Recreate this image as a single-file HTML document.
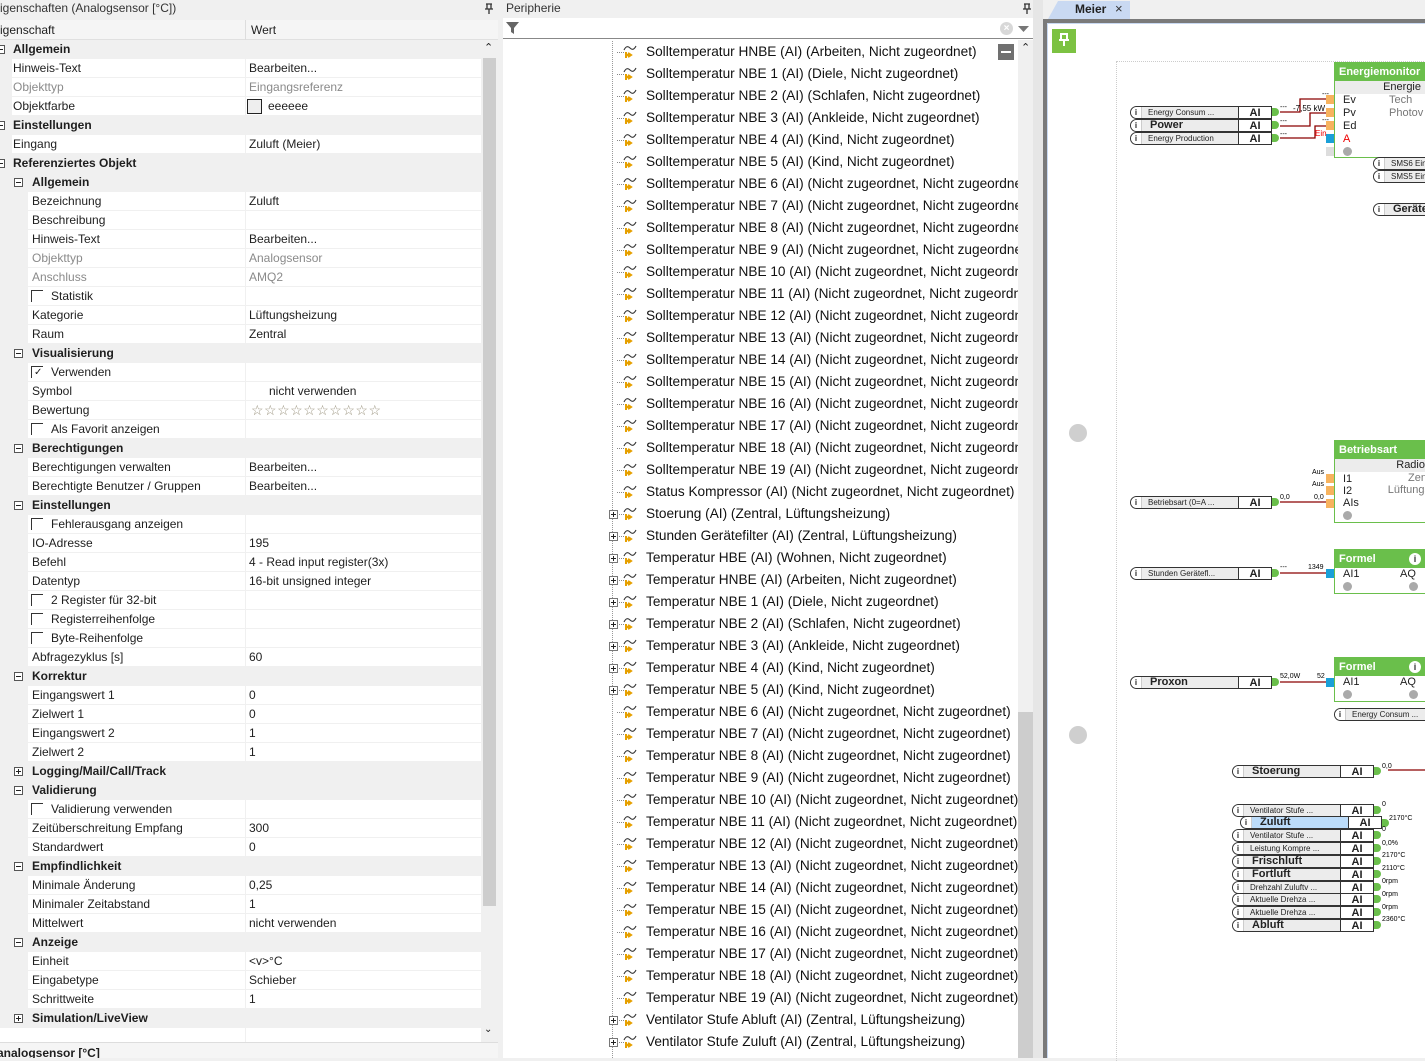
<!DOCTYPE html>
<html><head><meta charset="utf-8">
<style>
*{margin:0;padding:0;box-sizing:border-box}
body{width:1425px;height:1058px;overflow:hidden;background:#f0f0f0;font-family:"Liberation Sans",Arial,sans-serif;position:relative;color:#1e1e1e}
.abs{position:absolute}
#left{position:absolute;left:0;top:0;width:498px;height:1058px;background:#f0f0f0;overflow:hidden}
.ttl{font-size:12px;color:#333;position:absolute;top:1px;white-space:nowrap}
#hdr{position:absolute;left:0;top:20px;width:498px;height:20px;background:#f5f5f5;border-bottom:1px solid #e0e0e0;font-size:12px}
#rows{position:absolute;left:0;top:40px;width:481px}
.r{height:19px;position:relative;font-size:12px;line-height:19px;white-space:nowrap}
.r .n{position:absolute;top:0;height:18px;left:12px;width:233px;background:#fff}
.r .v{position:absolute;top:0;height:18px;left:246px;right:0;background:#fff;padding-left:3px}
.r.l2 .n{left:28px;width:217px}
.r .n span{padding-left:1px}
.r.l2 .n span{padding-left:4px}
.r.l2 .n span.cbt{padding-left:23px}
.r.l2 .n span.cb{padding-left:0}
.g{font-weight:bold;font-size:12px}
.g .t{position:absolute;left:13px}
.g.l2 .t{left:32px}
.pm{position:absolute;top:5px;width:9px;height:9px;border:1px solid #555;background:#fff}
.pm:before{content:"";position:absolute;left:1px;top:3px;width:5px;height:1px;background:#222}
.pm.p:after{content:"";position:absolute;left:3px;top:1px;width:1px;height:5px;background:#222}
.gr{color:#8a8a8a}
.cb{position:absolute;left:3px;top:3px;width:12px;height:12px;border-left:1px solid #333;border-top:1px solid #333}
.ck{position:absolute;left:6px;top:0;font-size:10px}
.it{position:absolute;left:143px;height:22px;line-height:22px;font-size:13.65px;white-space:nowrap;width:372px;overflow:hidden;color:#111}
.ic{position:absolute;left:118px;width:24px;height:18px}
.pb{position:absolute;left:106px;width:9px;height:9px;border:1px solid #777;background:#fff}
.pb:before{content:"";position:absolute;left:1px;top:3px;width:5px;height:1px;background:#222}
.pb:after{content:"";position:absolute;left:3px;top:1px;width:1px;height:5px;background:#222}
.dl{position:absolute;left:114px;width:9px;border-top:1px dotted #888}
.lb{position:absolute;height:13px;border:1px solid #333;border-radius:7px 0 0 7px;background:#ececec;font-size:8px;line-height:11px;white-space:nowrap;overflow:hidden;font-family:"Liberation Sans",Arial,sans-serif;color:#222}
.lb .i{position:absolute;left:0;top:0;width:11px;height:11px;background:#fff;border-right:1px solid #ccc;font-weight:bold;font-size:8px;text-align:center;border-radius:6px 0 0 6px}
.lb .tx{position:absolute;left:17px;top:0}
.lb .tx.b{font-size:11px;font-weight:bold;left:19px;top:0}
.lb .ai{position:absolute;right:0;top:0;width:33px;height:11px;border-left:1px solid #333;background:#fff;font-size:11px;font-weight:bold;text-align:center;line-height:12px}
.dot{position:absolute;width:7px;height:8px;background:#6abf4b;border-radius:0 4px 4px 0}
.blk{position:absolute;border:1px solid #6abf4b;background:#fff;font-size:11px}
.blk .h{background:#6abf4b;color:#fff;font-weight:bold;height:18px;line-height:18px;padding-left:4px;font-size:11px}
.sm{position:absolute;font-size:7px;color:#000;font-family:"Liberation Sans",Arial,sans-serif}
.op{position:absolute;width:8px;height:9px;background:#f7b35e}
</style></head><body>

<svg width="0" height="0" style="position:absolute"><defs>
<g id="pin"><path d="M2 1h6M3 1v5h4V1M1 6h8M5 6v5" stroke="#333" stroke-width="1.3" fill="none"/></g>
<g id="ico"><path d="M3 9c2-4 4-4 6-2s4 2 6-2" stroke="#333" stroke-width="1.1" fill="none"/><path d="M5 11v6M5 14h4M7 12l3 2-3 2" stroke="#e6a000" stroke-width="2" fill="none"/></g>
</defs></svg>

<div id="left">
<div class="ttl" style="left:-8px">Eigenschaften (Analogsensor [°C])</div>
<svg class="abs" style="left:484px;top:3px" width="10" height="12"><use href="#pin"/></svg>
<div id="hdr"><span class="abs" style="left:-8px;top:3px">Eigenschaft</span><span class="abs" style="left:245px;top:0;height:20px;border-left:1px solid #ddd"></span><span class="abs" style="left:251px;top:3px">Wert</span></div>
<div id="rows">
<div class="r g"><span class="pm" style="left:-4px"></span><span class="t">Allgemein</span></div>
<div class="r"><div class="n"><span>Hinweis-Text</span></div><div class="v">Bearbeiten...</div></div>
<div class="r gr"><div class="n"><span>Objekttyp</span></div><div class="v">Eingangsreferenz</div></div>
<div class="r"><div class="n"><span>Objektfarbe</span></div><div class="v"><span class="abs" style="left:1px;top:2px;width:15px;height:15px;border:1px solid #222;background:#eee"></span><span style="padding-left:19px">eeeeee</span></div></div>
<div class="r g"><span class="pm" style="left:-4px"></span><span class="t">Einstellungen</span></div>
<div class="r"><div class="n"><span>Eingang</span></div><div class="v">Zuluft (Meier)</div></div>
<div class="r g"><span class="pm" style="left:-4px"></span><span class="t">Referenziertes Objekt</span></div>
<div class="r g l2"><span class="pm" style="left:14px"></span><span class="t">Allgemein</span></div>
<div class="r l2"><div class="n"><span>Bezeichnung</span></div><div class="v">Zuluft</div></div>
<div class="r l2"><div class="n"><span>Beschreibung</span></div><div class="v"></div></div>
<div class="r l2"><div class="n"><span>Hinweis-Text</span></div><div class="v">Bearbeiten...</div></div>
<div class="r l2 gr"><div class="n"><span>Objekttyp</span></div><div class="v">Analogsensor</div></div>
<div class="r l2 gr"><div class="n"><span>Anschluss</span></div><div class="v">AMQ2</div></div>
<div class="r l2"><div class="n"><span class="cb"></span><span class="cbt">Statistik</span></div><div class="v"></div></div>
<div class="r l2"><div class="n"><span>Kategorie</span></div><div class="v">Lüftungsheizung</div></div>
<div class="r l2"><div class="n"><span>Raum</span></div><div class="v">Zentral</div></div>
<div class="r g l2"><span class="pm" style="left:14px"></span><span class="t">Visualisierung</span></div>
<div class="r l2"><div class="n"><span class="cb"></span><b class="ck" style="font-weight:normal">&#10003;</b><span class="cbt">Verwenden</span></div><div class="v"></div></div>
<div class="r l2"><div class="n"><span>Symbol</span></div><div class="v"><span style="padding-left:20px">nicht verwenden</span></div></div>
<div class="r l2"><div class="n"><span>Bewertung</span></div><div class="v" style="color:#9c9580;font-size:14px;letter-spacing:0.5px;padding-left:5px">☆☆☆☆☆☆☆☆☆☆</div></div>
<div class="r l2"><div class="n"><span class="cb"></span><span class="cbt">Als Favorit anzeigen</span></div><div class="v"></div></div>
<div class="r g l2"><span class="pm" style="left:14px"></span><span class="t">Berechtigungen</span></div>
<div class="r l2"><div class="n"><span>Berechtigungen verwalten</span></div><div class="v">Bearbeiten...</div></div>
<div class="r l2"><div class="n"><span>Berechtigte Benutzer / Gruppen</span></div><div class="v">Bearbeiten...</div></div>
<div class="r g l2"><span class="pm" style="left:14px"></span><span class="t">Einstellungen</span></div>
<div class="r l2"><div class="n"><span class="cb"></span><span class="cbt">Fehlerausgang anzeigen</span></div><div class="v"></div></div>
<div class="r l2"><div class="n"><span>IO-Adresse</span></div><div class="v">195</div></div>
<div class="r l2"><div class="n"><span>Befehl</span></div><div class="v">4 - Read input register(3x)</div></div>
<div class="r l2"><div class="n"><span>Datentyp</span></div><div class="v">16-bit unsigned integer</div></div>
<div class="r l2"><div class="n"><span class="cb"></span><span class="cbt">2 Register für 32-bit</span></div><div class="v"></div></div>
<div class="r l2"><div class="n"><span class="cb"></span><span class="cbt">Registerreihenfolge</span></div><div class="v"></div></div>
<div class="r l2"><div class="n"><span class="cb"></span><span class="cbt">Byte-Reihenfolge</span></div><div class="v"></div></div>
<div class="r l2"><div class="n"><span>Abfragezyklus [s]</span></div><div class="v">60</div></div>
<div class="r g l2"><span class="pm" style="left:14px"></span><span class="t">Korrektur</span></div>
<div class="r l2"><div class="n"><span>Eingangswert 1</span></div><div class="v">0</div></div>
<div class="r l2"><div class="n"><span>Zielwert 1</span></div><div class="v">0</div></div>
<div class="r l2"><div class="n"><span>Eingangswert 2</span></div><div class="v">1</div></div>
<div class="r l2"><div class="n"><span>Zielwert 2</span></div><div class="v">1</div></div>
<div class="r g l2"><span class="pm p" style="left:14px"></span><span class="t">Logging/Mail/Call/Track</span></div>
<div class="r g l2"><span class="pm" style="left:14px"></span><span class="t">Validierung</span></div>
<div class="r l2"><div class="n"><span class="cb"></span><span class="cbt">Validierung verwenden</span></div><div class="v"></div></div>
<div class="r l2"><div class="n"><span>Zeitüberschreitung Empfang</span></div><div class="v">300</div></div>
<div class="r l2"><div class="n"><span>Standardwert</span></div><div class="v">0</div></div>
<div class="r g l2"><span class="pm" style="left:14px"></span><span class="t">Empfindlichkeit</span></div>
<div class="r l2"><div class="n"><span>Minimale Änderung</span></div><div class="v">0,25</div></div>
<div class="r l2"><div class="n"><span>Minimaler Zeitabstand</span></div><div class="v">1</div></div>
<div class="r l2"><div class="n"><span>Mittelwert</span></div><div class="v">nicht verwenden</div></div>
<div class="r g l2"><span class="pm" style="left:14px"></span><span class="t">Anzeige</span></div>
<div class="r l2"><div class="n"><span>Einheit</span></div><div class="v">&lt;v&gt;°C</div></div>
<div class="r l2"><div class="n"><span>Eingabetype</span></div><div class="v">Schieber</div></div>
<div class="r l2"><div class="n"><span>Schrittweite</span></div><div class="v">1</div></div>
<div class="r g l2"><span class="pm p" style="left:14px"></span><span class="t">Simulation/LiveView</span></div>
<div class="r"><div class="n" style="left:0;width:245px"></div><div class="v"></div></div>
</div>
<div class="abs" style="left:481px;top:40px;width:16px;height:1000px;background:#f0f0f0"></div>
<div class="abs" style="left:483px;top:58px;width:13px;height:848px;background:#cdcdcd"></div>
<div class="abs" style="left:484px;top:41px;font-size:11px">&#8963;</div>
<div class="abs" style="left:484px;top:1024px;font-size:10px">&#8964;</div>
<div class="abs" style="left:0;top:1042px;width:498px;height:16px;background:#f5f5f5;border-top:1px solid #ddd"></div>
<div class="abs" style="left:-3px;top:1046px;font-size:12px;font-weight:bold">analogsensor [°C]</div>
</div>

<div class="abs" style="left:498px;top:0;width:5px;height:1058px;background:#f0f0f0"></div>

<div class="abs" style="left:503px;top:0;width:530px;height:1058px;background:#fff">
<div class="abs" style="left:0;top:0;width:530px;height:18px;background:#f0f0f0"></div>
<div class="abs" style="left:3px;top:1px;font-size:12px;color:#333">Peripherie</div>
<svg class="abs" style="left:519px;top:3px" width="10" height="12"><use href="#pin"/></svg>
<div class="abs" style="left:0;top:18px;width:530px;height:21px;background:#fff;border-bottom:1px solid #888"></div>
<svg class="abs" style="left:3px;top:21px" width="14" height="14"><path d="M0 1h13l-5 6v6l-3-2v-4z" fill="#666"/></svg>
<div class="abs" style="left:497px;top:22px;width:13px;height:13px;border-radius:7px;background:#d8d8d8;color:#fff;font-size:10px;text-align:center;line-height:13px;font-weight:bold">×</div>
<svg class="abs" style="left:515px;top:26px" width="11" height="7"><path d="M0 0h11l-5.5 6z" fill="#777"/></svg>
<div class="abs" style="left:109px;top:41px;height:1017px;border-left:1px dotted #999"></div>
<div class="abs" style="left:515px;top:40px;width:15px;height:1018px;background:#f0f0f0"></div>
<div class="abs" style="left:515px;top:712px;width:15px;height:346px;background:#cdcdcd"></div>
<div class="abs" style="left:518px;top:41px;font-size:11px">&#8963;</div>
<div class="abs" style="left:495px;top:44px;width:16px;height:16px;background:#707070"><div style="margin:7px 3px;height:2px;background:#fff"></div></div>
</div>

<div class="abs" style="left:503px;top:0;width:515px;height:1058px;overflow:hidden">
<div class="dl" style="top:52px"></div><svg class="ic" style="top:41px" viewBox="0 0 24 18"><use href="#ico"/></svg><div class="it" style="top:41px">Solltemperatur HNBE (AI) (Arbeiten, Nicht zugeordnet)</div>
<div class="dl" style="top:74px"></div><svg class="ic" style="top:63px" viewBox="0 0 24 18"><use href="#ico"/></svg><div class="it" style="top:63px">Solltemperatur NBE 1 (AI) (Diele, Nicht zugeordnet)</div>
<div class="dl" style="top:96px"></div><svg class="ic" style="top:85px" viewBox="0 0 24 18"><use href="#ico"/></svg><div class="it" style="top:85px">Solltemperatur NBE 2 (AI) (Schlafen, Nicht zugeordnet)</div>
<div class="dl" style="top:118px"></div><svg class="ic" style="top:107px" viewBox="0 0 24 18"><use href="#ico"/></svg><div class="it" style="top:107px">Solltemperatur NBE 3 (AI) (Ankleide, Nicht zugeordnet)</div>
<div class="dl" style="top:140px"></div><svg class="ic" style="top:129px" viewBox="0 0 24 18"><use href="#ico"/></svg><div class="it" style="top:129px">Solltemperatur NBE 4 (AI) (Kind, Nicht zugeordnet)</div>
<div class="dl" style="top:162px"></div><svg class="ic" style="top:151px" viewBox="0 0 24 18"><use href="#ico"/></svg><div class="it" style="top:151px">Solltemperatur NBE 5 (AI) (Kind, Nicht zugeordnet)</div>
<div class="dl" style="top:184px"></div><svg class="ic" style="top:173px" viewBox="0 0 24 18"><use href="#ico"/></svg><div class="it" style="top:173px">Solltemperatur NBE 6 (AI) (Nicht zugeordnet, Nicht zugeordnet)</div>
<div class="dl" style="top:206px"></div><svg class="ic" style="top:195px" viewBox="0 0 24 18"><use href="#ico"/></svg><div class="it" style="top:195px">Solltemperatur NBE 7 (AI) (Nicht zugeordnet, Nicht zugeordnet)</div>
<div class="dl" style="top:228px"></div><svg class="ic" style="top:217px" viewBox="0 0 24 18"><use href="#ico"/></svg><div class="it" style="top:217px">Solltemperatur NBE 8 (AI) (Nicht zugeordnet, Nicht zugeordnet)</div>
<div class="dl" style="top:250px"></div><svg class="ic" style="top:239px" viewBox="0 0 24 18"><use href="#ico"/></svg><div class="it" style="top:239px">Solltemperatur NBE 9 (AI) (Nicht zugeordnet, Nicht zugeordnet)</div>
<div class="dl" style="top:272px"></div><svg class="ic" style="top:261px" viewBox="0 0 24 18"><use href="#ico"/></svg><div class="it" style="top:261px">Solltemperatur NBE 10 (AI) (Nicht zugeordnet, Nicht zugeordnet)</div>
<div class="dl" style="top:294px"></div><svg class="ic" style="top:283px" viewBox="0 0 24 18"><use href="#ico"/></svg><div class="it" style="top:283px">Solltemperatur NBE 11 (AI) (Nicht zugeordnet, Nicht zugeordnet)</div>
<div class="dl" style="top:316px"></div><svg class="ic" style="top:305px" viewBox="0 0 24 18"><use href="#ico"/></svg><div class="it" style="top:305px">Solltemperatur NBE 12 (AI) (Nicht zugeordnet, Nicht zugeordnet)</div>
<div class="dl" style="top:338px"></div><svg class="ic" style="top:327px" viewBox="0 0 24 18"><use href="#ico"/></svg><div class="it" style="top:327px">Solltemperatur NBE 13 (AI) (Nicht zugeordnet, Nicht zugeordnet)</div>
<div class="dl" style="top:360px"></div><svg class="ic" style="top:349px" viewBox="0 0 24 18"><use href="#ico"/></svg><div class="it" style="top:349px">Solltemperatur NBE 14 (AI) (Nicht zugeordnet, Nicht zugeordnet)</div>
<div class="dl" style="top:382px"></div><svg class="ic" style="top:371px" viewBox="0 0 24 18"><use href="#ico"/></svg><div class="it" style="top:371px">Solltemperatur NBE 15 (AI) (Nicht zugeordnet, Nicht zugeordnet)</div>
<div class="dl" style="top:404px"></div><svg class="ic" style="top:393px" viewBox="0 0 24 18"><use href="#ico"/></svg><div class="it" style="top:393px">Solltemperatur NBE 16 (AI) (Nicht zugeordnet, Nicht zugeordnet)</div>
<div class="dl" style="top:426px"></div><svg class="ic" style="top:415px" viewBox="0 0 24 18"><use href="#ico"/></svg><div class="it" style="top:415px">Solltemperatur NBE 17 (AI) (Nicht zugeordnet, Nicht zugeordnet)</div>
<div class="dl" style="top:448px"></div><svg class="ic" style="top:437px" viewBox="0 0 24 18"><use href="#ico"/></svg><div class="it" style="top:437px">Solltemperatur NBE 18 (AI) (Nicht zugeordnet, Nicht zugeordnet)</div>
<div class="dl" style="top:470px"></div><svg class="ic" style="top:459px" viewBox="0 0 24 18"><use href="#ico"/></svg><div class="it" style="top:459px">Solltemperatur NBE 19 (AI) (Nicht zugeordnet, Nicht zugeordnet)</div>
<div class="dl" style="top:492px"></div><svg class="ic" style="top:481px" viewBox="0 0 24 18"><use href="#ico"/></svg><div class="it" style="top:481px">Status Kompressor (AI) (Nicht zugeordnet, Nicht zugeordnet)</div>
<div class="pb" style="top:510px"></div><div class="dl" style="top:514px"></div><svg class="ic" style="top:503px" viewBox="0 0 24 18"><use href="#ico"/></svg><div class="it" style="top:503px">Stoerung (AI) (Zentral, Lüftungsheizung)</div>
<div class="pb" style="top:532px"></div><div class="dl" style="top:536px"></div><svg class="ic" style="top:525px" viewBox="0 0 24 18"><use href="#ico"/></svg><div class="it" style="top:525px">Stunden Gerätefilter (AI) (Zentral, Lüftungsheizung)</div>
<div class="pb" style="top:554px"></div><div class="dl" style="top:558px"></div><svg class="ic" style="top:547px" viewBox="0 0 24 18"><use href="#ico"/></svg><div class="it" style="top:547px">Temperatur HBE (AI) (Wohnen, Nicht zugeordnet)</div>
<div class="pb" style="top:576px"></div><div class="dl" style="top:580px"></div><svg class="ic" style="top:569px" viewBox="0 0 24 18"><use href="#ico"/></svg><div class="it" style="top:569px">Temperatur HNBE (AI) (Arbeiten, Nicht zugeordnet)</div>
<div class="pb" style="top:598px"></div><div class="dl" style="top:602px"></div><svg class="ic" style="top:591px" viewBox="0 0 24 18"><use href="#ico"/></svg><div class="it" style="top:591px">Temperatur NBE 1 (AI) (Diele, Nicht zugeordnet)</div>
<div class="pb" style="top:620px"></div><div class="dl" style="top:624px"></div><svg class="ic" style="top:613px" viewBox="0 0 24 18"><use href="#ico"/></svg><div class="it" style="top:613px">Temperatur NBE 2 (AI) (Schlafen, Nicht zugeordnet)</div>
<div class="pb" style="top:642px"></div><div class="dl" style="top:646px"></div><svg class="ic" style="top:635px" viewBox="0 0 24 18"><use href="#ico"/></svg><div class="it" style="top:635px">Temperatur NBE 3 (AI) (Ankleide, Nicht zugeordnet)</div>
<div class="pb" style="top:664px"></div><div class="dl" style="top:668px"></div><svg class="ic" style="top:657px" viewBox="0 0 24 18"><use href="#ico"/></svg><div class="it" style="top:657px">Temperatur NBE 4 (AI) (Kind, Nicht zugeordnet)</div>
<div class="pb" style="top:686px"></div><div class="dl" style="top:690px"></div><svg class="ic" style="top:679px" viewBox="0 0 24 18"><use href="#ico"/></svg><div class="it" style="top:679px">Temperatur NBE 5 (AI) (Kind, Nicht zugeordnet)</div>
<div class="dl" style="top:712px"></div><svg class="ic" style="top:701px" viewBox="0 0 24 18"><use href="#ico"/></svg><div class="it" style="top:701px">Temperatur NBE 6 (AI) (Nicht zugeordnet, Nicht zugeordnet)</div>
<div class="dl" style="top:734px"></div><svg class="ic" style="top:723px" viewBox="0 0 24 18"><use href="#ico"/></svg><div class="it" style="top:723px">Temperatur NBE 7 (AI) (Nicht zugeordnet, Nicht zugeordnet)</div>
<div class="dl" style="top:756px"></div><svg class="ic" style="top:745px" viewBox="0 0 24 18"><use href="#ico"/></svg><div class="it" style="top:745px">Temperatur NBE 8 (AI) (Nicht zugeordnet, Nicht zugeordnet)</div>
<div class="dl" style="top:778px"></div><svg class="ic" style="top:767px" viewBox="0 0 24 18"><use href="#ico"/></svg><div class="it" style="top:767px">Temperatur NBE 9 (AI) (Nicht zugeordnet, Nicht zugeordnet)</div>
<div class="dl" style="top:800px"></div><svg class="ic" style="top:789px" viewBox="0 0 24 18"><use href="#ico"/></svg><div class="it" style="top:789px">Temperatur NBE 10 (AI) (Nicht zugeordnet, Nicht zugeordnet)</div>
<div class="dl" style="top:822px"></div><svg class="ic" style="top:811px" viewBox="0 0 24 18"><use href="#ico"/></svg><div class="it" style="top:811px">Temperatur NBE 11 (AI) (Nicht zugeordnet, Nicht zugeordnet)</div>
<div class="dl" style="top:844px"></div><svg class="ic" style="top:833px" viewBox="0 0 24 18"><use href="#ico"/></svg><div class="it" style="top:833px">Temperatur NBE 12 (AI) (Nicht zugeordnet, Nicht zugeordnet)</div>
<div class="dl" style="top:866px"></div><svg class="ic" style="top:855px" viewBox="0 0 24 18"><use href="#ico"/></svg><div class="it" style="top:855px">Temperatur NBE 13 (AI) (Nicht zugeordnet, Nicht zugeordnet)</div>
<div class="dl" style="top:888px"></div><svg class="ic" style="top:877px" viewBox="0 0 24 18"><use href="#ico"/></svg><div class="it" style="top:877px">Temperatur NBE 14 (AI) (Nicht zugeordnet, Nicht zugeordnet)</div>
<div class="dl" style="top:910px"></div><svg class="ic" style="top:899px" viewBox="0 0 24 18"><use href="#ico"/></svg><div class="it" style="top:899px">Temperatur NBE 15 (AI) (Nicht zugeordnet, Nicht zugeordnet)</div>
<div class="dl" style="top:932px"></div><svg class="ic" style="top:921px" viewBox="0 0 24 18"><use href="#ico"/></svg><div class="it" style="top:921px">Temperatur NBE 16 (AI) (Nicht zugeordnet, Nicht zugeordnet)</div>
<div class="dl" style="top:954px"></div><svg class="ic" style="top:943px" viewBox="0 0 24 18"><use href="#ico"/></svg><div class="it" style="top:943px">Temperatur NBE 17 (AI) (Nicht zugeordnet, Nicht zugeordnet)</div>
<div class="dl" style="top:976px"></div><svg class="ic" style="top:965px" viewBox="0 0 24 18"><use href="#ico"/></svg><div class="it" style="top:965px">Temperatur NBE 18 (AI) (Nicht zugeordnet, Nicht zugeordnet)</div>
<div class="dl" style="top:998px"></div><svg class="ic" style="top:987px" viewBox="0 0 24 18"><use href="#ico"/></svg><div class="it" style="top:987px">Temperatur NBE 19 (AI) (Nicht zugeordnet, Nicht zugeordnet)</div>
<div class="pb" style="top:1016px"></div><div class="dl" style="top:1020px"></div><svg class="ic" style="top:1009px" viewBox="0 0 24 18"><use href="#ico"/></svg><div class="it" style="top:1009px">Ventilator Stufe Abluft (AI) (Zentral, Lüftungsheizung)</div>
<div class="pb" style="top:1038px"></div><div class="dl" style="top:1042px"></div><svg class="ic" style="top:1031px" viewBox="0 0 24 18"><use href="#ico"/></svg><div class="it" style="top:1031px">Ventilator Stufe Zuluft (AI) (Zentral, Lüftungsheizung)</div>
</div>

<!-- right panel -->
<div class="abs" style="left:1033px;top:0;width:10px;height:1058px;background:#e6e6e6"></div>
<div class="abs" style="left:1043px;top:0;width:382px;height:19px;background:#f0f0f0"></div>
<div class="abs" style="left:1048px;top:1px;width:82px;height:18px;background:#c9d9f2;clip-path:polygon(10px 0,100% 0,100% 100%,0 100%)"></div>
<div class="abs" style="left:1075px;top:2px;font-size:12px;font-weight:bold;color:#222">Meier</div>
<div class="abs" style="left:1115px;top:1px;font-size:13px;color:#333">×</div>
<div class="abs" style="left:1043px;top:19px;width:382px;height:1039px;background:#fff;border-left:4px solid #7a7a7a;border-top:4px solid #7a7a7a;box-shadow:inset 1px 1px 0 #c9d9f2"></div>
<div class="abs" style="left:1052px;top:29px;width:24px;height:24px;background:#7cc242"></div>
<svg class="abs" style="left:1056px;top:32px" width="16" height="16"><path d="M4 2h8M5 2v6h6V2M3 8h10M8 8v6" stroke="#fff" stroke-width="2" fill="none"/></svg>
<div class="abs" style="left:1116px;top:61px;width:320px;height:1000px;border-left:1px dotted #ccc;border-top:1px dotted #ccc"></div>

<svg class="abs" style="left:1043px;top:0" width="382" height="1058">
<g stroke="#8b0000" stroke-width="1.3" fill="none">
<path d="M237 112H257V99H287"/>
<path d="M237 126H267V113H287"/>
<path d="M237 138H272V126H287"/>
<path d="M237 502H287"/>
<path d="M237 573H287"/>
<path d="M237 682H287"/>
<path d="M345 770H382"/>
</g>
<circle cx="35" cy="433" r="9" fill="#cfcfcf"/>
<circle cx="35" cy="735" r="9" fill="#cfcfcf"/>
</svg>

<div class="blk" style="left:1334px;top:62px;width:100px;height:96px"><div class="h">Energiemonitor</div>
<div style="background:#ececec;height:13px;line-height:13px;text-align:right;padding-right:12px">Energie</div>
<div class="abs" style="left:8px;top:31px;line-height:13px">Ev<br>Pv<br>Ed<br><span style="color:#e00">A</span></div>
<div class="abs" style="left:54px;top:31px;line-height:13px;color:#777">Tech<br>Photov</div>
<div class="abs" style="left:8px;top:84px;width:9px;height:9px;border-radius:5px;background:#aaa"></div>
</div>
<div class="op" style="left:1326px;top:95px"></div><div class="op" style="left:1326px;top:108px"></div><div class="op" style="left:1326px;top:121px"></div>
<div class="abs" style="left:1326px;top:134px;width:8px;height:9px;background:#1aa0d8"></div>
<div class="abs" style="left:1326px;top:147px;width:8px;height:9px;background:#ddd"></div>
<div class="sm" style="left:1322px;top:91px">---</div><div class="sm" style="left:1293px;top:104px;font-size:8px">-7,55 kW</div><div class="sm" style="left:1322px;top:117px">---</div>
<div class="sm" style="left:1315px;top:129px;color:#e00;font-size:8px">Ein</div>
<div class="sm" style="left:1280px;top:104px">---</div><div class="sm" style="left:1280px;top:118px">---</div><div class="sm" style="left:1280px;top:131px">---</div>

<div class="lb" style="left:1130px;top:106px;width:142px"><span class="i">i</span><span class="tx">Energy Consum ...</span><span class="ai">AI</span></div>
<div class="lb" style="left:1130px;top:119px;width:142px"><span class="i">i</span><span class="tx b">Power</span><span class="ai">AI</span></div>
<div class="lb" style="left:1130px;top:132px;width:142px"><span class="i">i</span><span class="tx">Energy Production</span><span class="ai">AI</span></div>
<div class="dot" style="left:1272px;top:108px"></div><div class="dot" style="left:1272px;top:121px"></div><div class="dot" style="left:1272px;top:134px"></div>

<div class="lb" style="left:1373px;top:157px;width:60px"><span class="i">i</span><span class="tx">SMS6 Ein</span></div>
<div class="lb" style="left:1373px;top:170px;width:60px"><span class="i">i</span><span class="tx">SMS5 Ein</span></div>
<div class="lb" style="left:1373px;top:203px;width:60px"><span class="i">i</span><span class="tx b">Geräte</span></div>

<div class="blk" style="left:1334px;top:440px;width:100px;height:83px"><div class="h">Betriebsart</div>
<div style="background:#ececec;height:13px;line-height:13px;text-align:right;padding-right:8px">Radio</div>
<div class="abs" style="left:8px;top:32px;line-height:12px">I1<br>I2<br>AIs</div>
<div class="abs" style="left:50px;top:31px;line-height:12px;color:#777;text-align:right;width:45px">Zent<br>Lüftungs</div>
<div class="abs" style="left:8px;top:70px;width:9px;height:9px;border-radius:5px;background:#aaa"></div></div>
<div class="op" style="left:1326px;top:474px"></div><div class="op" style="left:1326px;top:486px"></div><div class="op" style="left:1326px;top:499px"></div>
<div class="sm" style="left:1312px;top:469px">Aus</div><div class="sm" style="left:1312px;top:481px">Aus</div><div class="sm" style="left:1314px;top:494px">0,0</div><div class="sm" style="left:1280px;top:494px">0,0</div>
<div class="lb" style="left:1130px;top:496px;width:142px"><span class="i">i</span><span class="tx">Betriebsart (0=A ...</span><span class="ai">AI</span></div>
<div class="dot" style="left:1272px;top:498px"></div>

<div class="blk" style="left:1334px;top:549px;width:100px;height:45px"><div class="h">Formel <span style="position:absolute;left:74px;top:3px;width:12px;height:12px;border-radius:6px;background:#fff;color:#333;font-size:9px;text-align:center;line-height:12px">i</span></div>
<div class="abs" style="left:8px;top:18px">AI1</div><div class="abs" style="left:65px;top:18px">AQ</div>
<div class="abs" style="left:8px;top:32px;width:9px;height:9px;border-radius:5px;background:#aaa"></div><div class="abs" style="left:74px;top:32px;width:9px;height:9px;border-radius:5px;background:#aaa"></div></div>
<div class="abs" style="left:1326px;top:569px;width:8px;height:9px;background:#1aa0d8"></div>
<div class="sm" style="left:1308px;top:564px">1349</div><div class="sm" style="left:1280px;top:564px">---</div>
<div class="lb" style="left:1130px;top:567px;width:142px"><span class="i">i</span><span class="tx">Stunden Gerätefl...</span><span class="ai">AI</span></div>
<div class="dot" style="left:1272px;top:569px"></div>

<div class="blk" style="left:1334px;top:657px;width:100px;height:45px"><div class="h">Formel <span style="position:absolute;left:74px;top:3px;width:12px;height:12px;border-radius:6px;background:#fff;color:#333;font-size:9px;text-align:center;line-height:12px">i</span></div>
<div class="abs" style="left:8px;top:18px">AI1</div><div class="abs" style="left:65px;top:18px">AQ</div>
<div class="abs" style="left:8px;top:32px;width:9px;height:9px;border-radius:5px;background:#aaa"></div><div class="abs" style="left:74px;top:32px;width:9px;height:9px;border-radius:5px;background:#aaa"></div></div>
<div class="abs" style="left:1326px;top:678px;width:8px;height:9px;background:#1aa0d8"></div>
<div class="sm" style="left:1317px;top:673px">52</div><div class="sm" style="left:1280px;top:673px">52,0W</div>
<div class="lb" style="left:1130px;top:676px;width:142px"><span class="i">i</span><span class="tx b">Proxon</span><span class="ai">AI</span></div>
<div class="dot" style="left:1272px;top:678px"></div>
<div class="lb" style="left:1334px;top:708px;width:95px"><span class="i">i</span><span class="tx">Energy Consum ...</span></div>

<div class="lb" style="left:1232px;top:765px;width:142px"><span class="i">i</span><span class="tx b">Stoerung</span><span class="ai">AI</span></div>
<div class="dot" style="left:1374px;top:767px"></div><div class="sm" style="left:1382px;top:763px">0,0</div>

<div class="lb" style="left:1232px;top:804px;width:142px"><span class="i">i</span><span class="tx">Ventilator Stufe ...</span><span class="ai">AI</span></div>
<div class="lb" style="left:1240px;top:816px;width:142px;background:#bcdcfa"><span class="i">i</span><span class="tx b">Zuluft</span><span class="ai">AI</span></div>
<div class="lb" style="left:1232px;top:829px;width:142px"><span class="i">i</span><span class="tx">Ventilator Stufe ...</span><span class="ai">AI</span></div>
<div class="lb" style="left:1232px;top:842px;width:142px"><span class="i">i</span><span class="tx">Leistung Kompre ...</span><span class="ai">AI</span></div>
<div class="lb" style="left:1232px;top:855px;width:142px"><span class="i">i</span><span class="tx b">Frischluft</span><span class="ai">AI</span></div>
<div class="lb" style="left:1232px;top:868px;width:142px"><span class="i">i</span><span class="tx b">Fortluft</span><span class="ai">AI</span></div>
<div class="lb" style="left:1232px;top:881px;width:142px"><span class="i">i</span><span class="tx">Drehzahl Zuluftv ...</span><span class="ai">AI</span></div>
<div class="lb" style="left:1232px;top:893px;width:142px"><span class="i">i</span><span class="tx">Aktuelle Drehza ...</span><span class="ai">AI</span></div>
<div class="lb" style="left:1232px;top:906px;width:142px"><span class="i">i</span><span class="tx">Aktuelle Drehza ...</span><span class="ai">AI</span></div>
<div class="lb" style="left:1232px;top:919px;width:142px"><span class="i">i</span><span class="tx b">Abluft</span><span class="ai">AI</span></div>
<div class="dot" style="left:1374px;top:806px"></div><div class="dot" style="left:1382px;top:819px"></div><div class="dot" style="left:1374px;top:831px"></div><div class="dot" style="left:1374px;top:844px"></div><div class="dot" style="left:1374px;top:857px"></div><div class="dot" style="left:1374px;top:870px"></div><div class="dot" style="left:1374px;top:883px"></div><div class="dot" style="left:1374px;top:895px"></div><div class="dot" style="left:1374px;top:908px"></div><div class="dot" style="left:1374px;top:921px"></div>
<div class="sm" style="left:1382px;top:801px">0</div><div class="sm" style="left:1389px;top:815px">2170°C</div><div class="sm" style="left:1382px;top:826px">0</div><div class="sm" style="left:1382px;top:840px">0,0%</div><div class="sm" style="left:1382px;top:852px">2170°C</div><div class="sm" style="left:1382px;top:865px">2110°C</div><div class="sm" style="left:1382px;top:878px">0rpm</div><div class="sm" style="left:1382px;top:891px">0rpm</div><div class="sm" style="left:1382px;top:904px">0rpm</div><div class="sm" style="left:1382px;top:916px">2360°C</div>
</body></html>
